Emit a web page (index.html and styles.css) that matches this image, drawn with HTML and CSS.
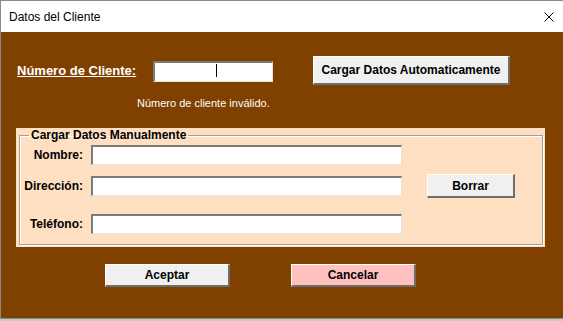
FILE: index.html
```html
<!DOCTYPE html>
<html lang="es">
<head>
    <meta charset="UTF-8">
    <title>Datos del Cliente</title>
    <link rel="stylesheet" href="styles.css">
</head>
<body>
    <div class="window">
        <div class="title-bar">
            <span class="title">Datos del Cliente</span>
            <svg class="close" width="10" height="10" viewBox="0 0 10 10">
                <path d="M0.5 0.5 L9.5 9.5 M9.5 0.5 L0.5 9.5" stroke="#000" stroke-width="1" fill="none"/>
            </svg>
        </div>

        <div class="form">
            <div class="client-row">
                <label class="client-label" for="cliente">Número de Cliente:</label>
                <span class="client-box">
                    <input type="text" id="cliente" class="text-box client-input">
                    <span class="caret"></span>
                </span>
                <button class="btn btn-auto">Cargar Datos Automaticamente</button>
            </div>
            <div class="error">Número de cliente inválido.</div>

            <div class="frame">
                <fieldset class="manual">
                    <legend>Cargar Datos Manualmente</legend>
                    <div class="manual-grid">
                        <label for="nombre" class="row-1">Nombre:</label>
                        <input type="text" id="nombre" class="text-box row-1">

                        <label for="direccion" class="row-2">Dirección:</label>
                        <input type="text" id="direccion" class="text-box row-2">
                        <button class="btn btn-clear row-2">Borrar</button>

                        <label for="telefono" class="row-3">Teléfono:</label>
                        <input type="text" id="telefono" class="text-box row-3">
                    </div>
                </fieldset>
            </div>

            <div class="actions">
                <button class="btn btn-action">Aceptar</button>
                <button class="btn btn-action btn-cancel">Cancelar</button>
            </div>
        </div>
    </div>
</body>
</html>
```

FILE: styles.css
```css
body {
    margin: 0;
    padding: 0;
    background-color: #c8c8c8;
    font-family: 'Liberation Sans', Arial, sans-serif;
}
.window {
    width: 563px;
    height: 319px;
    box-sizing: border-box;
    border: 1px solid #8a8a8a;
    border-right: none;
    display: flex;
    flex-direction: column;
    background-color: #804000;
}
.title-bar {
    height: 31px;
    background-color: white;
    display: flex;
    align-items: center;
    justify-content: space-between;
    padding: 0 9px 0 8px;
    flex-shrink: 0;
}
.title {
    font-size: 12px;
    color: #000;
}
.close {
    margin-top: 1px;
}
.form {
    flex: 1;
    display: flex;
    flex-direction: column;
}
.client-row {
    display: flex;
    align-items: center;
    margin-top: 24px;
    padding-left: 16px;
    height: 29px;
}
.client-label {
    width: 136px;
    color: white;
    font-weight: bold;
    font-size: 13px;
    text-decoration: underline;
}
.client-box {
    position: relative;
    display: block;
    margin-top: 2px;
}
.client-input {
    width: 120px;
    height: 21px;
}
.caret {
    position: absolute;
    left: 63px;
    top: 3px;
    width: 1px;
    height: 13px;
    background-color: #000;
}
.text-box {
    box-sizing: border-box;
    background-color: white;
    border-style: solid;
    border-width: 2px 1px 1px 2px;
    border-color: #7a7a7a #e3e3e3 #e3e3e3 #7a7a7a;
    margin: 0;
    padding: 0;
    outline: none;
}
.btn {
    box-sizing: border-box;
    background-color: #f0f0f0;
    border-style: solid;
    border-width: 1px 2px 2px 1px;
    border-color: #ffffff #6e6e6e #6e6e6e #ffffff;
    font-family: 'Liberation Sans', Arial, sans-serif;
    font-weight: bold;
    font-size: 12px;
    color: #000;
    padding: 0;
    margin: 0;
}
.btn-auto {
    margin-left: 40px;
    width: 197px;
    height: 29px;
}
.error {
    color: white;
    font-size: 11px;
    margin: 11px 0 0 136px;
    height: 14px;
    line-height: 14px;
}
.frame {
    margin: 18px 0 0 15px;
    width: 529px;
    height: 119px;
    box-sizing: border-box;
    background-color: #ffdfc2;
    padding: 0 2px 2px 3px;
}
.manual {
    margin: 0;
    padding: 3px 0 0 0;
    height: 117px;
    box-sizing: border-box;
    border: 1px solid #a0a0a0;
    box-shadow: inset 1px 1px 0 #fff, 1px 1px 0 #fff;
}
.manual legend {
    font-weight: bold;
    font-size: 12px;
    color: #000;
    line-height: 14px;
    padding: 0 2px;
    margin-left: 9px;
}
.manual-grid {
    display: grid;
    grid-template-columns: 63px 311px 88px;
    column-gap: 8px;
    row-gap: 0;
    align-items: center;
}
.manual-grid label {
    text-align: right;
    font-weight: bold;
    font-size: 12px;
    color: #000;
}
.manual-grid .text-box {
    width: 311px;
    height: 20px;
}
.row-1 {
    grid-row: 1;
    grid-column-start: auto;
}
.row-2 {
    grid-row: 2;
    margin-top: 9px;
}
.row-3 {
    grid-row: 3;
    margin-top: 16px;
}
.btn-clear {
    grid-column: 3;
    margin-left: 17px;
    width: 88px;
    height: 24px;
}
.btn-clear.row-2 {
    margin-top: 9px;
}
.actions {
    display: flex;
    gap: 61px;
    margin: 17px 0 0 104px;
}
.btn-action {
    width: 125px;
    height: 23px;
}
.btn-cancel {
    background-color: #ffc0c0;
}
```
